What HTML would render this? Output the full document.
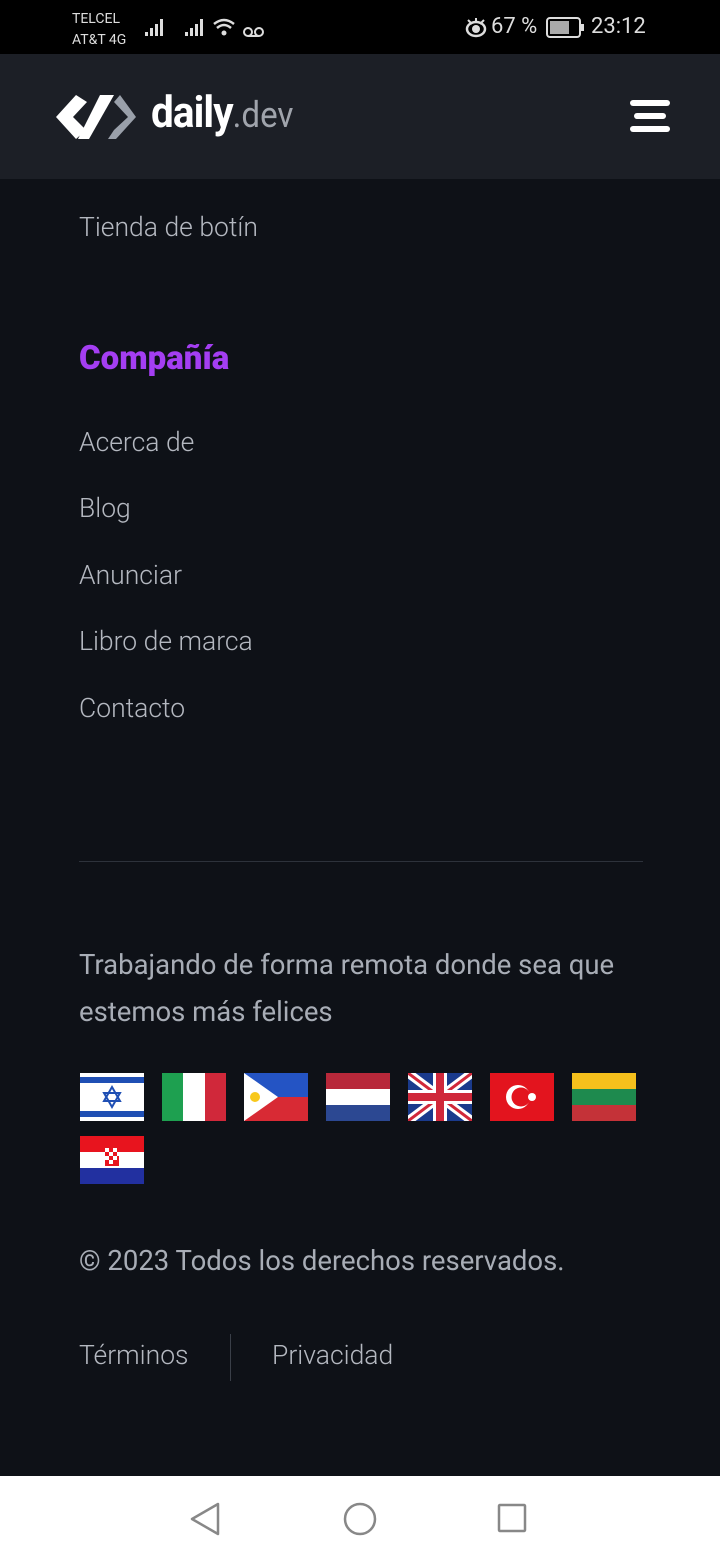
<!DOCTYPE html>
<html><head><meta charset="utf-8"><style>
*{margin:0;padding:0;box-sizing:border-box}
body{width:720px;height:1560px;background:#0e1117;font-family:"Roboto","Liberation Sans",sans-serif;color:#b4b8c0;position:relative;overflow:hidden}
.abs{position:absolute}
.sb{top:0;left:0;width:720px;height:54px;background:#000;color:#ddd}
.hdr{top:54px;left:0;width:720px;height:125px;background:#1c1f26}
.lnk{position:absolute;left:79px;font-size:26.5px;color:#b4b8c0;font-weight:300;white-space:nowrap}
.nav{top:1476px;left:0;width:720px;height:84px;background:#fff}
.flag{position:absolute;width:64px;height:48px}
</style></head><body>
<div class="abs sb">
 <div class="abs" style="left:72px;top:9px;font-size:14px;line-height:21px">TELCEL<br>AT&amp;T 4G</div>
 <svg class="abs" style="left:144px;top:16px" width="125" height="24" viewBox="0 0 125 24" fill="#ddd">
  <rect x="1" y="16" width="3" height="4"/><rect x="6" y="12" width="3" height="8"/><rect x="11" y="8" width="3" height="12"/><rect x="16" y="3" width="3" height="17"/>
  <rect x="41" y="16" width="3" height="4"/><rect x="46" y="12" width="3" height="8"/><rect x="51" y="8" width="3" height="12"/><rect x="56" y="3" width="3" height="17"/>
  <path d="M70 8 Q80 0 90 8" stroke="#ddd" stroke-width="2.5" fill="none"/><path d="M73 12 Q80 6 87 12" stroke="#ddd" stroke-width="2.5" fill="none"/><circle cx="80" cy="17" r="2.5"/>
  <circle cx="104" cy="16" r="4" stroke="#ddd" stroke-width="2" fill="none"/><circle cx="115" cy="16" r="4" stroke="#ddd" stroke-width="2" fill="none"/><rect x="104" y="19" width="11" height="2"/>
 </svg>
 <svg class="abs" style="left:465px;top:17px" width="24" height="22" viewBox="0 0 24 22"><ellipse cx="11" cy="12" rx="9" ry="7" stroke="#ddd" stroke-width="2.5" fill="none"/><circle cx="11" cy="12" r="4" fill="#ddd"/><path d="M3 3l4 4M11 1v5M19 3l-4 4" stroke="#ddd" stroke-width="2"/></svg>
 <div class="abs" style="left:491px;top:14px;font-size:22px">67 %</div>
 <svg class="abs" style="left:546px;top:17px" width="40" height="22" viewBox="0 0 40 22"><rect x="1" y="1" width="33" height="19" rx="3" stroke="#ddd" stroke-width="2" fill="none"/><rect x="4" y="4" width="19" height="13" fill="#aaa"/><rect x="35" y="7" width="3" height="7" fill="#ddd"/></svg>
 <div class="abs" style="left:591px;top:14px;font-size:22px">23:12</div>
</div>
<div class="abs hdr">
 <svg class="abs" style="left:54px;top:38px" width="84" height="50" viewBox="0 0 84 50">
  <path d="M22 3 L2 25 L22 47 L32 38 L19 25 L33 10 Z" fill="#fff"/>
  <path d="M36 3 L50 3 L25 47 L14 47 Z" fill="#fff" transform="translate(10,0)"/>
  <path d="M60 10 L74 25 L60 38 L54 47 L62 47 L82 25 L66 3 Z" fill="#9aa0aa"/>
 </svg>
 <div class="abs" style="left:151px;top:32px;font-size:44px;font-weight:bold;color:#fff;letter-spacing:-1px;transform:scaleX(0.92);transform-origin:left">daily<span style="font-weight:normal;color:#a0a4ac;font-size:36px;letter-spacing:0">.dev</span></div>
 <svg class="abs" style="left:628px;top:44px" width="44" height="36"><rect x="2" y="2" width="40" height="6" rx="3" fill="#fff"/><rect x="6" y="15" width="32" height="6" rx="3" fill="#fff"/><rect x="2" y="28" width="40" height="6" rx="3" fill="#fff"/></svg>
</div>
<div class="lnk" style="top:212px">Tienda de botín</div>
<div class="lnk" style="top:339px;font-size:33px;font-weight:900;color:#a43ef2">Compañía</div>
<div class="lnk" style="top:427px">Acerca de</div>
<div class="lnk" style="top:493px">Blog</div>
<div class="lnk" style="top:560px">Anunciar</div>
<div class="lnk" style="top:626px">Libro de marca</div>
<div class="lnk" style="top:693px">Contacto</div>
<div class="abs" style="left:79px;top:861px;width:564px;height:1px;background:#2d323b"></div>
<div class="lnk" style="top:941px;line-height:47px;width:600px;font-size:27.5px;font-weight:400;white-space:normal;color:#a8adb6">Trabajando de forma remota donde sea que estemos más felices</div>
<svg class="flag" style="left:80px;top:1073px" viewBox="0 0 64 48"><rect width="64" height="48" fill="#fff"/><rect y="4" width="64" height="6" fill="#1f4fb4"/><rect y="38" width="64" height="6" fill="#1f4fb4"/><path d="M32 14l8 14h-16z M32 34l8-14h-16z" stroke="#1f4fb4" stroke-width="2" fill="none"/></svg>
<svg class="flag" style="left:162px;top:1073px" viewBox="0 0 64 48"><rect width="21" height="48" fill="#1ea050"/><rect x="21" width="22" height="48" fill="#fff"/><rect x="43" width="21" height="48" fill="#d0283a"/></svg>
<svg class="flag" style="left:244px;top:1073px" viewBox="0 0 64 48"><rect width="64" height="24" fill="#2454c4"/><rect y="24" width="64" height="24" fill="#d82a34"/><path d="M0 0L34 24L0 48Z" fill="#fff"/><circle cx="11" cy="24" r="5" fill="#f8c81c"/></svg>
<svg class="flag" style="left:326px;top:1073px" viewBox="0 0 64 48"><rect width="64" height="16" fill="#b8283a"/><rect y="16" width="64" height="16" fill="#fff"/><rect y="32" width="64" height="16" fill="#2c4892"/></svg>
<svg class="flag" style="left:408px;top:1073px" viewBox="0 0 64 48"><rect width="64" height="48" fill="#1a3a8c"/><path d="M0 0L64 48M64 0L0 48" stroke="#fff" stroke-width="9"/><path d="M0 0L64 48M64 0L0 48" stroke="#d0283a" stroke-width="3"/><path d="M32 0V48M0 24H64" stroke="#fff" stroke-width="14"/><path d="M32 0V48M0 24H64" stroke="#d0283a" stroke-width="8"/></svg>
<svg class="flag" style="left:490px;top:1073px" viewBox="0 0 64 48"><rect width="64" height="48" fill="#e3141e"/><circle cx="28" cy="24" r="12" fill="#fff"/><circle cx="31" cy="24" r="9.5" fill="#e3141e"/><circle cx="42" cy="24" r="4" fill="#fff"/></svg>
<svg class="flag" style="left:572px;top:1073px" viewBox="0 0 64 48"><rect width="64" height="16" fill="#f5c01c"/><rect y="16" width="64" height="16" fill="#1e8a4e"/><rect y="32" width="64" height="16" fill="#c43238"/></svg>
<svg class="flag" style="left:80px;top:1136px" viewBox="0 0 64 48"><rect width="64" height="16" fill="#e8141e"/><rect y="16" width="64" height="16" fill="#fff"/><rect y="32" width="64" height="16" fill="#2230a0"/><rect x="25" y="10" width="14" height="20" fill="#e8141e"/><path d="M25 12h4v4h-4zM33 12h4v4h-4zM29 16h4v4h-4zM37 16h2v4h-2zM25 20h4v4h-4zM33 20h4v4h-4zM29 24h4v4h-4z" fill="#fff"/></svg>
<div class="lnk" style="top:1244px;font-size:27.5px;font-weight:400;color:#a8adb6">© 2023 Todos los derechos reservados.</div>
<div class="lnk" style="top:1340px">Términos</div>
<div class="abs" style="left:230px;top:1334px;width:1px;height:47px;background:#3a3f48"></div>
<div class="lnk" style="top:1340px;left:272px">Privacidad</div>
<div class="abs nav">
 <svg class="abs" style="left:188px;top:24px" width="350" height="40" viewBox="0 0 350 40">
  <path d="M30 4L4 19L30 34Z" stroke="#888" stroke-width="2.5" fill="none" stroke-linejoin="round"/>
  <circle cx="172" cy="19" r="15" stroke="#888" stroke-width="2.5" fill="none"/>
  <rect x="311" y="5" width="26" height="26" rx="1" stroke="#888" stroke-width="2.5" fill="none"/>
 </svg>
</div>
</body></html>
